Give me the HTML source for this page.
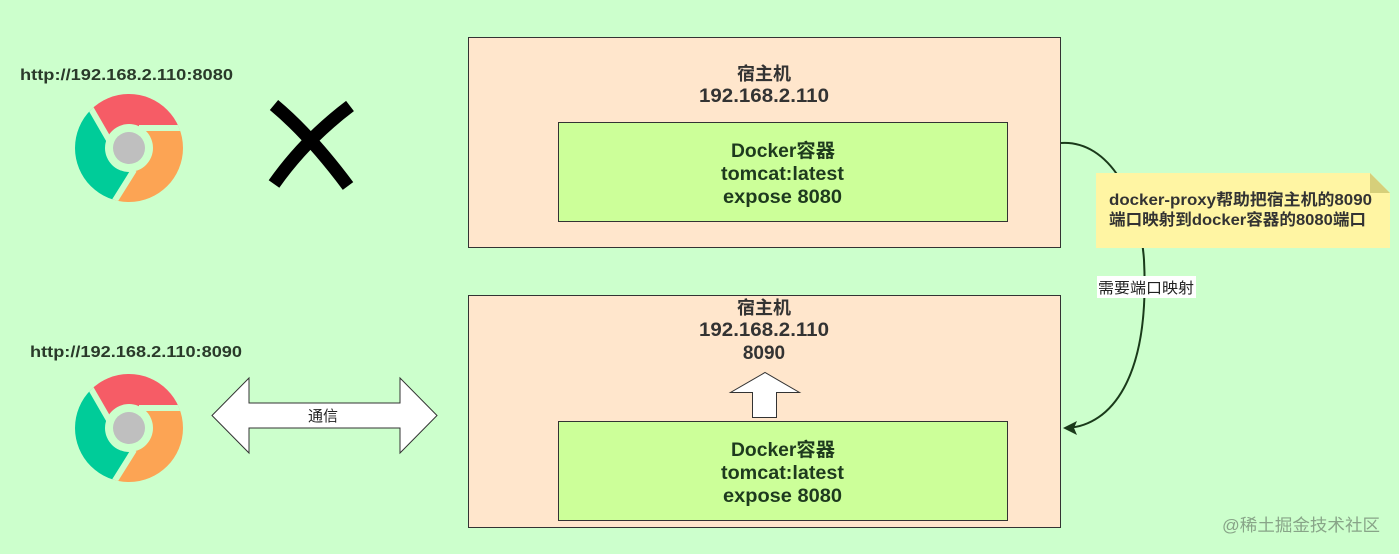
<!DOCTYPE html>
<html><head><meta charset="utf-8"><style>
html,body{margin:0;padding:0;background:#ccffcc;}
svg{display:block;}
text{font-family:"Liberation Sans","Noto Sans CJK SC",sans-serif;}
</style></head><body>
<svg width="1399" height="554" viewBox="0 0 1399 554" xmlns="http://www.w3.org/2000/svg">
<rect width="1399" height="554" fill="#ccffcc"/>
<defs>
<clipPath id="cc"><circle cx="0" cy="0" r="54"/></clipPath>
<g id="chrome">
 <g clip-path="url(#cc)">
  <path d="M-20,-8 L-50,-60 L70,-60 L70,-20 L10,-20 Z" fill="#f65c66"/>
  <path d="M10,-20 L70,-20 L70,70 L-25,70 L5,22 Z" fill="#fca454"/>
  <path d="M-20,-8 L5,22 L-25,70 L-70,70 L-70,-60 L-50,-60 Z" fill="#00cc99"/>
  <path d="M-20,-8 L-50,-60 M10,-20 L70,-20 M5,22 L-25,70" stroke="#ccffcc" stroke-width="6"/>
 </g>
 <circle r="24" fill="#ccffcc"/>
 <circle r="16" fill="#bfbfbf"/>
</g>
</defs>

<text x="20" y="80" font-size="16" font-weight="bold" fill="#2a3a2a" textLength="213" lengthAdjust="spacingAndGlyphs">http://192.168.2.110:8080</text>
<text x="30" y="357" font-size="16" font-weight="bold" fill="#2a3a2a" textLength="212" lengthAdjust="spacingAndGlyphs">http://192.168.2.110:8090</text>
<use href="#chrome" x="129" y="148"/>
<use href="#chrome" x="129" y="428"/>

<!-- X -->
<path d="M274,105 Q310,135 348,186" stroke="#000" stroke-width="13" fill="none"/>
<path d="M350,106 Q305,140 274,184" stroke="#000" stroke-width="13" fill="none"/>

<!-- top host -->
<rect x="468.5" y="37.5" width="592" height="210" fill="#ffe6cc" stroke="#333" stroke-width="1"/>
<text x="764" y="80" font-size="18" font-weight="bold" fill="#333" text-anchor="middle">宿主机</text>
<text x="699" y="102" font-size="19" font-weight="bold" fill="#333" textLength="130" lengthAdjust="spacingAndGlyphs">192.168.2.110</text>
<rect x="558.5" y="122.5" width="449" height="99" fill="#ccff99" stroke="#333" stroke-width="1"/>
<g font-size="19" font-weight="bold" fill="#1e3a1e">
<text x="731" y="157" textLength="104" lengthAdjust="spacingAndGlyphs">Docker容器</text>
<text x="721" y="180" textLength="123" lengthAdjust="spacingAndGlyphs">tomcat:latest</text>
<text x="723" y="203" textLength="119" lengthAdjust="spacingAndGlyphs">expose 8080</text>
</g>

<!-- bottom host -->
<rect x="468.5" y="295.5" width="592" height="232" fill="#ffe6cc" stroke="#333" stroke-width="1"/>
<text x="764" y="314" font-size="18" font-weight="bold" fill="#333" text-anchor="middle">宿主机</text>
<text x="699" y="336" font-size="19" font-weight="bold" fill="#333" textLength="130" lengthAdjust="spacingAndGlyphs">192.168.2.110</text>
<text x="764" y="359" font-size="19" font-weight="bold" fill="#333" text-anchor="middle">8090</text>
<rect x="558.5" y="421.5" width="449" height="99" fill="#ccff99" stroke="#333" stroke-width="1"/>
<g font-size="19" font-weight="bold" fill="#1e3a1e">
<text x="731" y="456" textLength="104" lengthAdjust="spacingAndGlyphs">Docker容器</text>
<text x="721" y="479" textLength="123" lengthAdjust="spacingAndGlyphs">tomcat:latest</text>
<text x="723" y="502" textLength="119" lengthAdjust="spacingAndGlyphs">expose 8080</text>
</g>

<!-- up arrow -->
<path d="M752.5,417.5 L752.5,392.5 L730.5,392.5 L765,372.5 L799.5,392.5 L776.5,392.5 L776.5,417.5 Z" fill="#fff" stroke="#333" stroke-width="1"/>

<!-- double arrow -->
<path d="M212,415.5 L249,378 L249,403 L400,403 L400,378 L437,415.5 L400,453 L400,428 L249,428 L249,453 Z" fill="#fff" stroke="#333" stroke-width="1"/>
<text x="323" y="421" font-size="15" fill="#222" text-anchor="middle">通信</text>

<!-- curve -->
<path d="M1061,143 C1110,140 1140,200 1144,260 C1150,380 1110,425 1068,428" fill="none" stroke="#1a3a1a" stroke-width="2"/>
<path d="M1063,428 L1077,421 L1074,428 L1077,435 Z" fill="#1a3a1a"/>

<!-- note -->
<path d="M1096,173 L1370,173 L1390,193 L1390,248 L1096,248 Z" fill="#fff5a3"/>
<path d="M1370,173 L1390,193 L1370,193 Z" fill="#d6cf7a"/>
<g font-size="16" font-weight="bold" fill="#333">
<text x="1109" y="205" textLength="263" lengthAdjust="spacingAndGlyphs">docker-proxy帮助把宿主机的8090</text>
<text x="1109" y="225" textLength="257" lengthAdjust="spacingAndGlyphs">端口映射到docker容器的8080端口</text>
</g>

<rect x="1097" y="276" width="99" height="22" fill="#fff"/>
<text x="1098" y="293" font-size="15" fill="#222" textLength="96" lengthAdjust="spacingAndGlyphs">需要端口映射</text>

<text x="1222" y="531" font-size="17" fill="#88a488" textLength="158" lengthAdjust="spacingAndGlyphs">@稀土掘金技术社区</text>
</svg>
</body></html>
